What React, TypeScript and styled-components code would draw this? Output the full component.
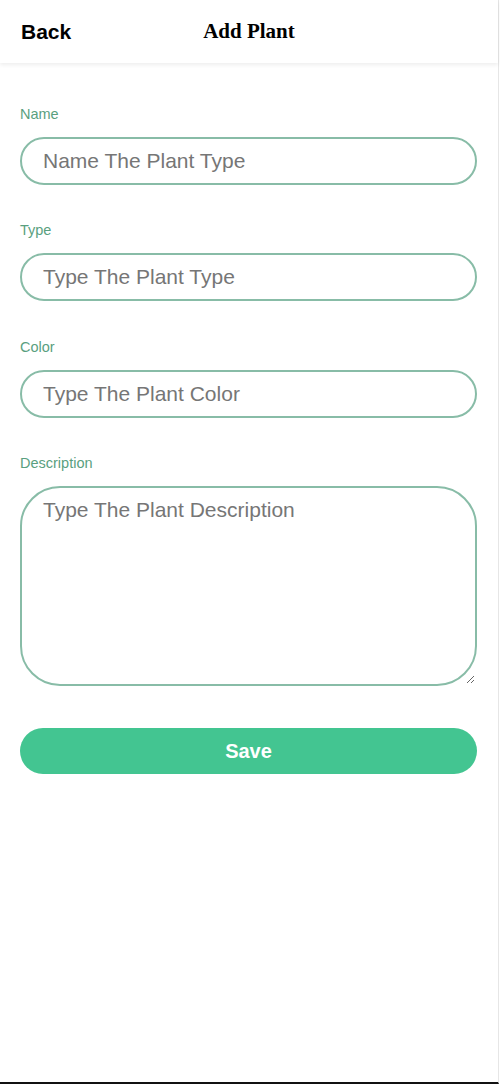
import React from "react";
import styled, { createGlobalStyle } from "styled-components";

const Global = createGlobalStyle`
  html, body { margin: 0; padding: 0; background: #ffffff; }
  * { box-sizing: border-box; }
`;

const Page = styled.div`
  width: 499px;
  height: 1084px;
  border-right: 1px solid #e6e6e6;
  border-bottom: 2px solid #111111;
  display: flex;
  flex-direction: column;
  background: #ffffff;
  font-family: "Liberation Sans", Arial, sans-serif;
`;

const Header = styled.header`
  height: 63px;
  display: grid;
  grid-template-columns: 1fr auto 1fr;
  align-items: center;
  padding: 0 21px;
  box-shadow: 0 2px 4px rgba(0, 0, 0, 0.07);
  position: relative;
  z-index: 1;
`;

const BackLink = styled.span`
  font-family: "Liberation Sans", Arial, sans-serif;
  font-weight: 700;
  font-size: 21px;
  color: #000000;
  justify-self: start;
`;

const Title = styled.h1`
  margin: 0;
  font-family: "Liberation Serif", "Times New Roman", serif;
  font-weight: 700;
  font-size: 21px;
  color: #000000;
`;

const Form = styled.form`
  display: flex;
  flex-direction: column;
  padding: 43px 21px 0 20px;
`;

const Field = styled.div<{ $after?: number }>`
  display: flex;
  flex-direction: column;
  gap: 15px;
  margin-bottom: ${(p) => p.$after ?? 37}px;
`;

const Label = styled.label`
  font-size: 14.5px;
  line-height: 16px;
  color: #5a9f80;
`;

const fieldBase = `
  width: 100%;
  border: 2px solid #88bca7;
  background: #ffffff;
  font-family: "Liberation Sans", Arial, sans-serif;
  font-size: 21px;
  color: #333333;
  outline: none;
  &::placeholder { color: #767676; opacity: 1; }
`;

const TextInput = styled.input`
  ${fieldBase}
  height: 48px;
  border-radius: 24px;
  padding: 0 21px;
`;

const TextArea = styled.textarea`
  ${fieldBase}
  height: 200px;
  border-radius: 40px;
  padding: 10px 21px;
  line-height: 24px;
  resize: vertical;
`;

const SaveButton = styled.button`
  height: 46px;
  width: 100%;
  border: none;
  border-radius: 23px;
  background: #43c591;
  color: #ffffff;
  font-family: "Liberation Sans", Arial, sans-serif;
  font-weight: 700;
  font-size: 20px;
  cursor: pointer;
`;

export default function App() {
  return (
    <>
      <Global />
      <Page>
        <Header>
          <BackLink>Back</BackLink>
          <Title>Add Plant</Title>
          <span />
        </Header>
        <Form onSubmit={(e) => e.preventDefault()}>
          <Field>
            <Label htmlFor="name">Name</Label>
            <TextInput id="name" placeholder="Name The Plant Type" />
          </Field>
          <Field $after={38}>
            <Label htmlFor="type">Type</Label>
            <TextInput id="type" placeholder="Type The Plant Type" />
          </Field>
          <Field>
            <Label htmlFor="color">Color</Label>
            <TextInput id="color" placeholder="Type The Plant Color" />
          </Field>
          <Field $after={42}>
            <Label htmlFor="desc">Description</Label>
            <TextArea id="desc" placeholder="Type The Plant Description" />
          </Field>
          <SaveButton type="submit">Save</SaveButton>
        </Form>
      </Page>
    </>
  );
}
